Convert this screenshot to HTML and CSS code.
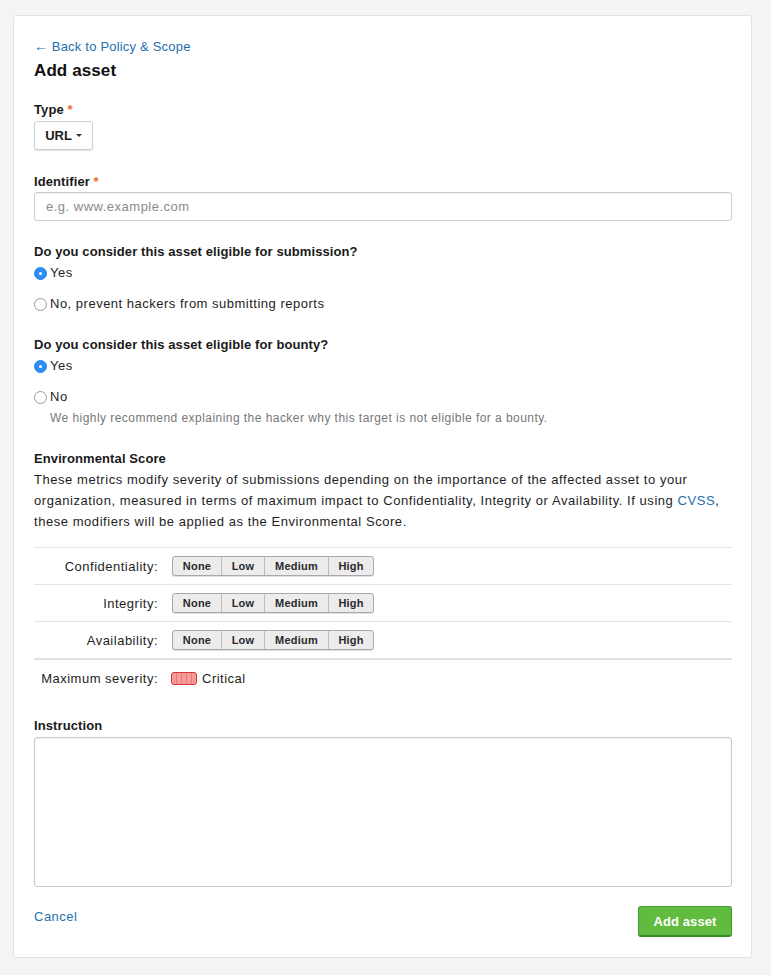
FILE: index.html
```html
<!DOCTYPE html>
<html>
<head>
<meta charset="utf-8">
<link rel="stylesheet" href="styles.css">
</head>
<body>
<div class="card">
  <a class="back" href="#"><span class="arrow">←</span> Back to Policy &amp; Scope</a>
  <h1 class="title">Add asset</h1>

  <div class="label type-label">Type <span class="req">*</span></div>
  <button class="dropdown">URL <span class="caret"></span></button>

  <div class="label ident-label">Identifier <span class="req">*</span></div>
  <div class="input"><span class="ph">e.g. www.example.com</span></div>

  <div class="label q">Do you consider this asset eligible for submission?</div>
  <div class="radio"><span class="dot on"></span>Yes</div>
  <div class="radio second"><span class="dot"></span>No, prevent hackers from submitting reports</div>

  <div class="label q q2">Do you consider this asset eligible for bounty?</div>
  <div class="radio"><span class="dot on"></span>Yes</div>
  <div class="radio second"><span class="dot"></span>No</div>
  <div class="help">We highly recommend explaining the hacker why this target is not eligible for a bounty.</div>

  <div class="label env">Environmental Score</div>
  <p class="para">These metrics modify severity of submissions depending on the importance of the affected asset to your organization, measured in terms of maximum impact to Confidentiality, Integrity or Availability. If using <a href="#">CVSS</a>, these modifiers will be applied as the Environmental Score.</p>

  <div class="metrics">
    <div class="mrow">
      <div class="mlabel">Confidentiality:</div>
      <div class="seg"><span class="s1">None</span><span class="s2">Low</span><span class="s3">Medium</span><span class="s4">High</span></div>
    </div>
    <div class="mrow">
      <div class="mlabel">Integrity:</div>
      <div class="seg"><span class="s1">None</span><span class="s2">Low</span><span class="s3">Medium</span><span class="s4">High</span></div>
    </div>
    <div class="mrow">
      <div class="mlabel">Availability:</div>
      <div class="seg"><span class="s1">None</span><span class="s2">Low</span><span class="s3">Medium</span><span class="s4">High</span></div>
    </div>
    <div class="mrow max">
      <div class="mlabel">Maximum severity:</div>
      <div class="sev"><span class="swatch"><i></i><i></i><i></i><i></i><i></i></span>Critical</div>
    </div>
  </div>

  <div class="label instr">Instruction</div>
  <div class="textarea"></div>

  <div class="actions">
    <a class="cancel" href="#">Cancel</a>
    <button class="submit">Add asset</button>
  </div>
</div>
</body>
</html>
```

FILE: styles.css
```css
* { box-sizing: border-box; }
html, body { margin: 0; padding: 0; background: #f4f4f4; }
body {
  font-family: "Liberation Sans", Arial, sans-serif;
  font-size: 13px;
  color: #1e1e1e;
  letter-spacing: 0.5px;
  padding: 15px 19px 18px 13px;
}
a { color: #1f6eb0; text-decoration: none; }
.card {
  background: #fff;
  border: 1px solid #e2e2e2;
  border-radius: 3px;
  padding: 21px 19px 20px 20px;
  display: flex;
  flex-direction: column;
  align-items: flex-start;
}
.back { line-height: 18px; height: 18px; font-size: 13px; letter-spacing: 0.2px; }
.arrow { font-size: 14px; letter-spacing: 0; line-height: 18px; }
.title {
  margin: 5px 0 0;
  font-size: 17px;
  line-height: 22px;
  font-weight: bold;
  color: #111;
  letter-spacing: 0.1px;
}
.label {
  font-weight: bold;
  line-height: 18px;
  font-size: 13px;
  color: #1a1a1a;
  letter-spacing: 0.1px;
}
.req { color: #f0682a; }
.type-label { margin-top: 19px; }
.dropdown {
  margin-top: 2px;
  height: 29px;
  width: 59px;
  border: 1px solid #cfcfcf;
  border-radius: 3px;
  background: #fff;
  box-shadow: 0 1px 1px rgba(0,0,0,0.12);
  font-family: inherit;
  font-size: 13px;
  font-weight: bold;
  color: #1a1a1a;
  display: flex;
  align-items: center;
  justify-content: center;
  gap: 4px;
  padding: 0;
}
.caret {
  width: 0; height: 0;
  border-left: 3px solid transparent;
  border-right: 3px solid transparent;
  border-top: 3px solid #333;
}
.ident-label { margin-top: 23px; }
.input {
  margin-top: 1px;
  align-self: stretch;
  height: 29px;
  border: 1px solid #cdcdcd;
  border-radius: 3px;
  box-shadow: inset 0 1px 1px rgba(0,0,0,0.06);
  padding: 0 11px;
  display: flex;
  align-items: center;
}
.ph { color: #8a8a8a; font-size: 13px; }
.q { margin-top: 22px; }
.q2 { margin-top: 23px; }
.radio {
  display: flex;
  align-items: center;
  line-height: 18px;
  margin-top: 3px;
}
.radio.second { margin-top: 13px; }
.dot {
  width: 13px; height: 13px;
  border-radius: 50%;
  border: 1px solid #9a9a9a;
  background: #fff;
  margin-right: 3px;
  position: relative;
}
.dot.on {
  background: #2e8ef3;
  border-color: #2a83e6;
}
.dot.on::after {
  content: "";
  position: absolute;
  left: 4px; top: 4px;
  width: 3px; height: 3px;
  border-radius: 50%;
  background: #fff;
}
.help {
  margin: 3px 0 0 16px;
  color: #777;
  font-size: 12px;
  line-height: 18px;
  letter-spacing: 0.45px;
}
.env { margin-top: 23px; }
.para {
  margin: 1px 0 0;
  line-height: 21px;
  font-size: 13px;
  color: #1e1e1e;
  letter-spacing: 0.55px;
}
.metrics {
  margin-top: 15px;
  align-self: stretch;
}
.mrow {
  border-top: 1px solid #e4e4e4;
  height: 37px;
  display: flex;
  align-items: center;
}
.mrow.max { border-top: 2px solid #e2e2e2; height: 38px; }
.mlabel {
  width: 124px;
  text-align: right;
  color: #1e1e1e;
  font-size: 13px;
}
.seg {
  margin-left: 14px;
  display: flex;
  height: 20px;
  border: 1px solid #a9a9a9;
  border-radius: 3px;
  background: #ececec;
  box-shadow: 0 1px 0 rgba(0,0,0,0.12);
  overflow: hidden;
  letter-spacing: 0.2px;
}
.seg span {
  display: flex;
  align-items: center;
  justify-content: center;
  font-size: 11px;
  font-weight: bold;
  color: #2a2a2a;
  border-left: 1px solid #bdbdbd;
}
.seg span:first-child { border-left: 0; }
.s1 { width: 48px; }
.s2 { width: 43px; }
.s3 { width: 64px; }
.s4 { width: 45px; }
.sev {
  margin-left: 13px;
  display: flex;
  align-items: center;
  font-size: 13px;
}
.swatch {
  display: flex;
  width: 26px;
  height: 13px;
  border: 1px solid #d9363e;
  border-radius: 3px;
  background: #f79a9a;
  margin-right: 5px;
  overflow: hidden;
}
.swatch i {
  flex: 1;
  border-left: 1px solid #e87a7a;
}
.swatch i:first-child { border-left: 0; }
.instr { margin-top: 21px; }
.textarea {
  margin-top: 2px;
  align-self: stretch;
  height: 150px;
  border: 1px solid #cbcbcb;
  border-radius: 3px;
  box-shadow: inset 0 1px 2px rgba(0,0,0,0.08);
}
.actions {
  margin-top: 19px;
  align-self: stretch;
  display: flex;
  justify-content: space-between;
  align-items: flex-start;
}
.cancel { line-height: 20px; margin-top: 1px; }
.submit {
  width: 94px;
  height: 31px;
  background: #61bb3e;
  border: 1px solid #449d2a;
  border-bottom: 2px solid #3a8a23;
  border-radius: 3px;
  color: #fff;
  font-family: inherit;
  font-size: 13px;
  font-weight: bold;
  letter-spacing: 0.1px;
  padding: 0;
}
```
